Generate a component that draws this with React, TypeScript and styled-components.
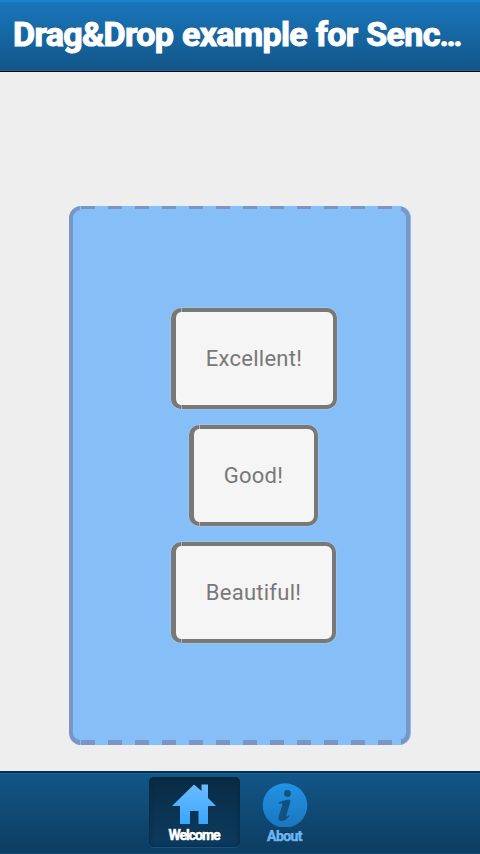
import React from "react";
import styled, { createGlobalStyle, css } from "styled-components";

const GlobalStyle = createGlobalStyle`
  * { box-sizing: border-box; }
  body { margin: 0; background: #eee; font-family: Roboto, "Liberation Sans", sans-serif; }
`;

const Screen = styled.div`
  display: flex;
  flex-direction: column;
  width: 480px;
  height: 854px;
  overflow: hidden;
  background: #eeeeee;
`;

const TitleBar = styled.header`
  flex: none;
  height: 72px;
  padding: 0 12px 0 13px;
  border-top: 2px solid #1985d0;
  border-bottom: 1px solid #000;
  background: linear-gradient(#1976bb, #125688);
  box-shadow: inset 0 -1px 0 #1468a6;
`;

const Title = styled.h1`
  margin: 0;
  font-size: 34px;
  line-height: 65px;
  font-weight: 700;
  letter-spacing: -0.68px;
  word-spacing: 1px;
  white-space: nowrap;
  color: #fff;
  -webkit-text-stroke: 1.1px #fff;
  text-shadow: 0 -1px 0 rgba(0, 0, 0, 0.5);
`;

const Ellipsis = styled.span`
  font-size: 30px;
  line-height: 1;
`;

const Content = styled.main`
  flex: 1;
  display: flex;
  flex-direction: column;
  padding: 134px 70px 26px 69px;
`;

const dashes = css`
  content: "";
  position: absolute;
  left: 7px;
  width: 320px;
  border-left: 1px solid #86bef7;
  background-color: #86bef7;
  background-image: repeating-linear-gradient(90deg, #7996c5 0 14px, #86bef7 14px 27px);
`;

const DropZone = styled.section`
  position: relative;
  flex: 1;
  display: flex;
  flex-direction: column;
  align-items: flex-start;
  gap: 16px;
  padding: 98px 0 0 98px;
  border: 4px solid #7996c5;
  border-bottom-width: 5px;
  border-radius: 12px;
  background: #86bef7;
  box-shadow: 1px 0 0 #86bef7;

  &::before {
    ${dashes}
    top: -4px;
    height: 4px;
    background-size: 100% 3px;
    background-repeat: no-repeat;
  }
  &::after {
    ${dashes}
    bottom: -5px;
    height: 5px;
  }
`;

const Card = styled.div<{ $width: number; $indent?: number }>`
  position: relative;
  display: flex;
  align-items: center;
  justify-content: center;
  width: ${(p) => p.$width}px;
  height: 101px;
  margin-left: ${(p) => p.$indent ?? 0}px;
  padding-right: 1px;
  border: 4px solid #787878;
  border-left-width: 5px;
  border-radius: 10px;
  background: #f5f5f5;
  color: #787878;
  font-size: 22px;
  letter-spacing: 0.25px;
  box-shadow: 0 0 0 0.5px #b5cade;

  &::before {
    content: "";
    position: absolute;
    top: -4px;
    bottom: -4px;
    left: 5px;
    width: 1px;
    border: solid #b4b4b4;
    border-width: 4px 0;
  }
`;

const TabBar = styled.nav`
  flex: none;
  display: flex;
  justify-content: center;
  gap: 5px;
  height: 83px;
  padding: 4px 7px 0 0;
  border-top: 2px solid #062f4e;
  border-bottom: 1px solid #0e4a76;
  background: linear-gradient(#125688, #0d3d61);
  box-shadow: inset 0 1px 0 #14669f;
`;

const Tab = styled.button<{ $active?: boolean }>`
  display: flex;
  flex-direction: column;
  align-items: center;
  width: ${(p) => (p.$active ? 91 : 80)}px;
  height: 70px;
  padding: 0;
  border: 0;
  border-radius: 5px;
  background: ${(p) => (p.$active ? "linear-gradient(#0a2b44, #0c3b5f)" : "none")};
  box-shadow: ${(p) => (p.$active ? "inset 0 0 4px #08243a, 0 1px 0 #125686" : "none")};
  color: ${(p) => (p.$active ? "#fff" : "#6ab6f3")};
  font: 700 14px/18px Roboto, sans-serif;
  letter-spacing: ${(p) => (p.$active ? "-1px" : "-0.6px")};
  -webkit-text-stroke: 0.5px currentColor;
  text-shadow: 0 -1px 0 rgba(0, 0, 0, 0.6);

  svg { flex: none; display: block; }
`;

const HomeIcon = () => (
  <svg width="91" height="49" viewBox="0 0 91 49">
    <defs>
      <linearGradient id="home" x1="0" y1="0" x2="0" y2="1">
        <stop offset="0" stopColor="#6cbcff" />
        <stop offset="1" stopColor="#38a7ff" />
      </linearGradient>
    </defs>
    <path fill="url(#home)" d="M45 7.5 L52.5 14 V7.5 H59 V21 L67 29 H59 V47 H49.5 V34 H41 V47 H31 V29 H23 Z" />
  </svg>
);

const InfoIcon = () => (
  <svg width="80" height="50" viewBox="0 0 80 50">
    <defs>
      <linearGradient id="info" x1="0" y1="0" x2="0" y2="1">
        <stop offset="0" stopColor="#2194e6" />
        <stop offset="1" stopColor="#1976bd" />
      </linearGradient>
    </defs>
    <circle cx="40" cy="28.5" r="22.3" fill="url(#info)" />
    <circle cx="42.5" cy="16.5" r="3.4" fill="#11517f" />
    <path fill="#11517f" d="M33.5 25.5 C37 24 40 23 43.5 22.5 Q46 22.5 45.3 25 L41.3 38.5 Q41 41 44 38 L44.5 39.2 Q39 44.7 35.5 44 Q32.5 43 33.8 39 L37.3 28 Q38 25.5 34 26.8 Z" />
  </svg>
);

export default function App() {
  return (
    <>
      <GlobalStyle />
      <Screen>
        <TitleBar>
          <Title>Drag&amp;Drop example for Senc<Ellipsis>…</Ellipsis></Title>
        </TitleBar>
        <Content>
          <DropZone>
            <Card $width={166}>Excellent!</Card>
            <Card $width={129} $indent={18}>Good!</Card>
            <Card $width={165}>Beautiful!</Card>
          </DropZone>
        </Content>
        <TabBar>
          <Tab $active><HomeIcon />Welcome</Tab>
          <Tab><InfoIcon />About</Tab>
        </TabBar>
      </Screen>
    </>
  );
}
